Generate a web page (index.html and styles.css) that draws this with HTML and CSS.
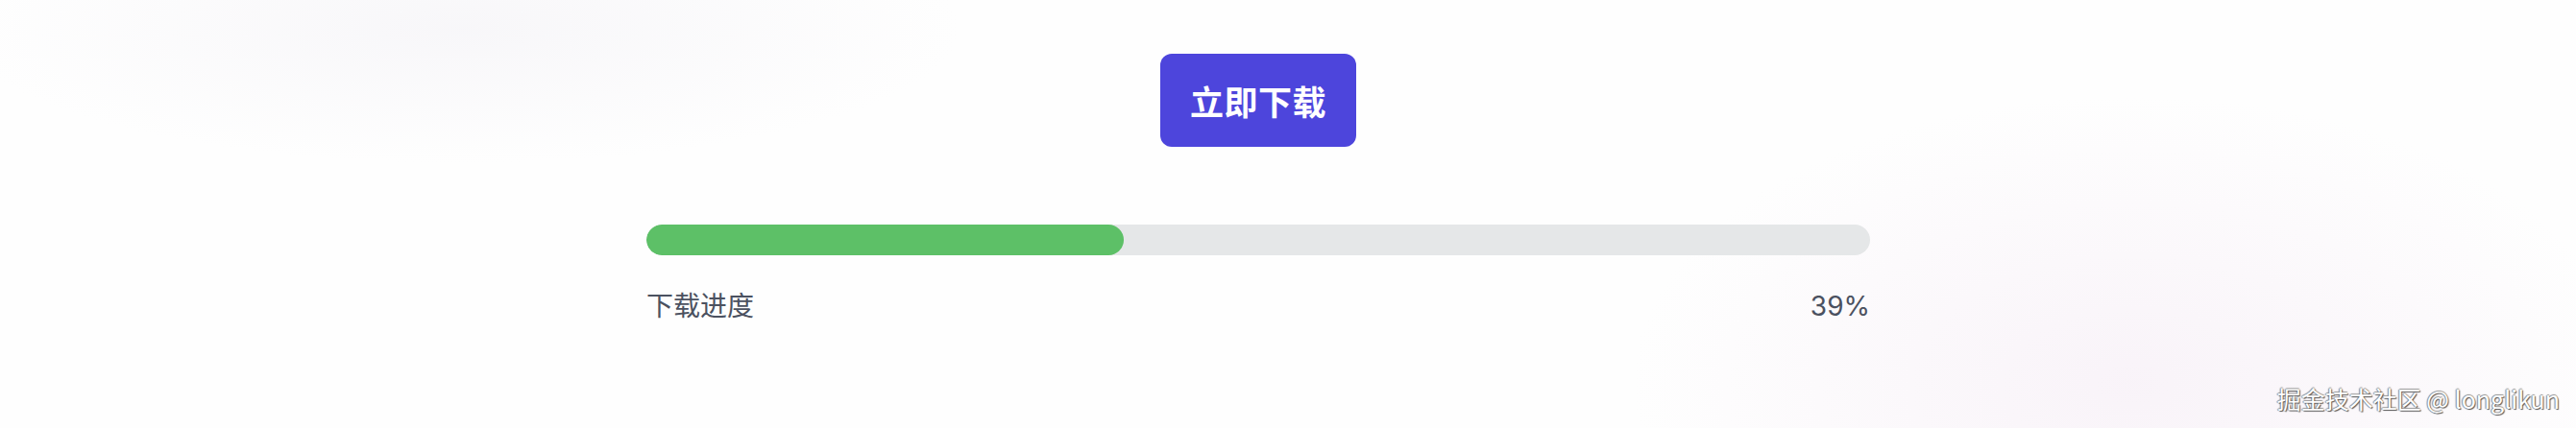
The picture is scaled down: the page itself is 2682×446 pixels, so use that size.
FILE: index.html
```html
<!DOCTYPE html>
<html lang="zh-CN">
<head>
<meta charset="utf-8">
<title>下载</title>
<link rel="stylesheet" href="styles.css">
</head>
<body>
<main class="page">
  <div class="panel">
    <button class="download-btn" type="button">立即下载</button>
    <div class="progress">
      <div class="track"><div class="fill" style="width: 39%"></div></div>
      <div class="labels">
        <span>下载进度</span>
        <span>39%</span>
      </div>
    </div>
  </div>
</main>
<div class="watermark">掘金技术社区 @ longlikun</div>
</body>
</html>
```
FILE: styles.css
```css
html, body {
  margin: 0;
  height: 100%;
}
body {
  position: relative;
  overflow: hidden;
  font-family: "Inter", "Noto Sans CJK SC", sans-serif;
  background:
    radial-gradient(ellipse 520px 140px at 480px 30px, rgba(246, 245, 248, 0.8), rgba(255,255,255,0) 100%),
    radial-gradient(ellipse 520px 300px at 2220px 400px, rgba(248, 242, 248, 0.9), rgba(255,255,255,0) 100%),
    #fefefe;
}
.page {
  box-sizing: border-box;
  height: 100%;
  padding: 56px 62px 0 0;
}
.panel {
  width: 1274px;
  margin: 0 auto;
  display: flex;
  flex-direction: column;
  align-items: center;
}
.download-btn {
  height: 97px;
  padding: 0 31px;
  border: none;
  border-radius: 12px;
  background: #4d45dc;
  color: #ffffff;
  font-family: "Noto Sans CJK SC", sans-serif;
  font-weight: 700;
  font-size: 35px;
  line-height: 1;
  letter-spacing: 0.5px;
}
.progress {
  width: 100%;
  margin-top: 81px;
}
.track {
  height: 32px;
  border-radius: 16px;
  background: #e5e7e8;
  overflow: hidden;
}
.fill {
  height: 100%;
  border-radius: 16px;
  background: #5dc067;
}
.labels {
  display: flex;
  justify-content: space-between;
  margin-top: 33px;
  font-size: 28px;
  line-height: 40px;
  color: #4b5160;
  font-family: "Inter", "Noto Sans CJK SC", sans-serif;
}
.watermark {
  position: absolute;
  right: 17px;
  bottom: 18px;
  font-family: "Noto Sans CJK SC", sans-serif;
  font-size: 25px;
  line-height: 1;
  color: #ffffff;
  text-shadow: 1px 1px 1px #555, -1px 0 1px #888, 0 -1px 1px #999;
}
```
